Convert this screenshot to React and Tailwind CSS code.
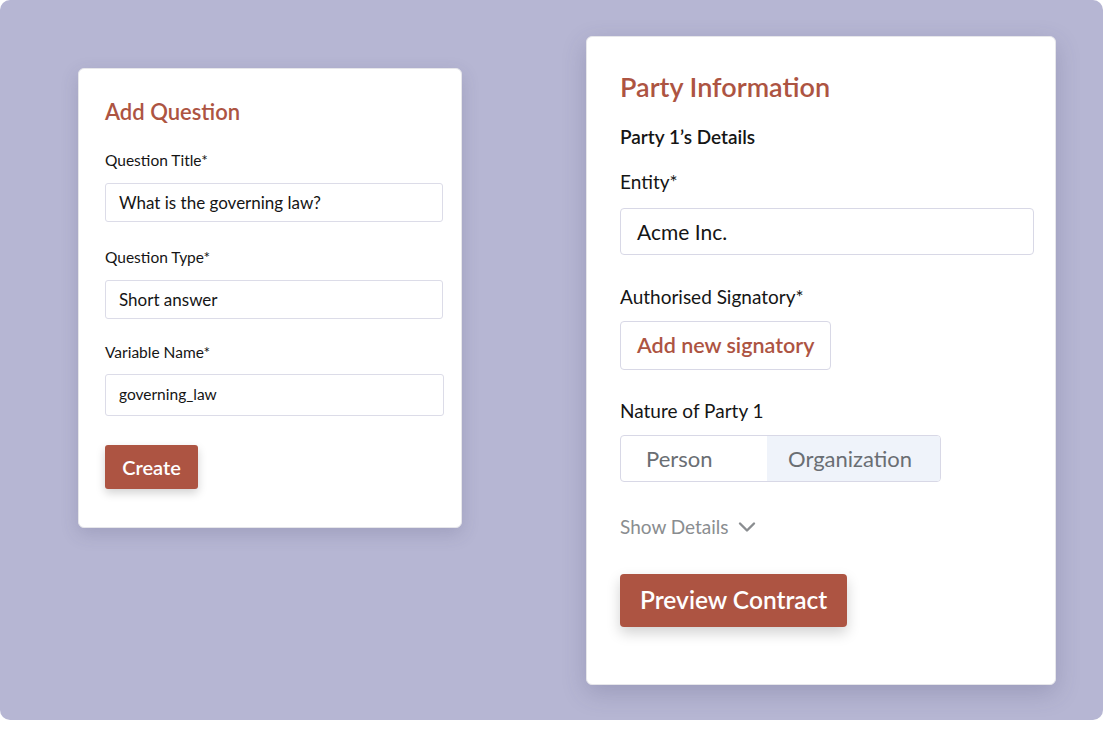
const font = { fontFamily: 'Lato, "Noto Sans", sans-serif' };

const Field = ({ label, children, className = '' }) => (
  <div className={className}>
    <div className="text-[15.5px] leading-[20px] text-[#151515]">{label}</div>
    {children}
  </div>
);

const AddQuestion = () => (
  <div className="mt-[68px] w-[384px] h-[460px] shrink-0 rounded-[6px] border border-[#e6e6ea] bg-white px-[26px] pt-[28px] shadow-[0_6px_18px_rgba(60,60,100,0.18)]">
    <h2 className="text-[22px] leading-[30px] font-semibold text-[#ad5442]">Add Question</h2>
    <Field label="Question Title*" className="mt-[23px]">
      <div className="mt-[13px] h-[39px] w-[338px] rounded-[3px] border border-[#dcdce8] px-[13px] flex items-center text-[17px] text-[#151515]">
        What is the governing law?
      </div>
    </Field>
    <Field label="Question Type*" className="mt-[25px]">
      <div className="mt-[13px] h-[39px] w-[338px] rounded-[3px] border border-[#dcdce8] px-[13px] flex items-center text-[17px] text-[#151515]">
        Short answer
      </div>
    </Field>
    <Field label="Variable Name*" className="mt-[23px]">
      <div className="mt-[12px] h-[42px] w-[339px] rounded-[3px] border border-[#dcdce8] px-[13px] flex items-center text-[15.5px] text-[#151515]">
        governing_law
      </div>
    </Field>
    <button className="mt-[29px] h-[44px] w-[93px] rounded-[3px] bg-[#ad5442] text-white text-[20px] font-semibold shadow-[0_4px_10px_rgba(0,0,0,0.18)]">
      Create
    </button>
  </div>
);

const PartyInfo = () => (
  <div className="mt-[36px] w-[470px] h-[649px] shrink-0 rounded-[6px] border border-[#e6e6ea] bg-white px-[33px] pt-[30px] shadow-[0_8px_24px_rgba(60,60,100,0.22)]">
    <h2 className="text-[27px] leading-[40px] font-semibold text-[#ad5442]">Party Information</h2>
    <div className="mt-[17px] text-[19px] leading-[26px] font-semibold text-[#151515]">Party 1’s Details</div>
    <div className="mt-[19px] text-[19px] leading-[26px] text-[#151515]">Entity*</div>
    <div className="mt-[13px] h-[47px] w-[414px] rounded-[4px] border border-[#d8d8e6] px-[16px] flex items-center text-[21px] text-[#151515]">
      Acme Inc.
    </div>
    <div className="mt-[29px] text-[19px] leading-[26px] text-[#151515]">Authorised Signatory*</div>
    <button className="mt-[11px] h-[49px] px-[16px] rounded-[4px] border border-[#d8d8e6] text-[21.5px] font-semibold text-[#ad5442]">
      Add new signatory
    </button>
    <div className="mt-[28px] text-[19px] leading-[26px] text-[#151515]">Nature of Party 1</div>
    <div className="mt-[11px] flex h-[47px] w-[321px] overflow-hidden rounded-[4px] border border-[#d8d8e6] text-[22px] text-[#6a6e73]">
      <div className="w-[146px] pl-[25px] flex items-center">Person</div>
      <div className="flex-1 pl-[21px] flex items-center bg-[#eff3fa]">Organization</div>
    </div>
    <div className="mt-[32px] flex items-center gap-[9px] text-[19px] leading-[26px] text-[#8a8d90]">
      Show Details
      <svg width="18" height="12" viewBox="0 0 18 12" fill="none" stroke="#8a8d90" strokeWidth="2.4" strokeLinecap="round" strokeLinejoin="round">
        <path d="M2 2.5l7 7 7-7" />
      </svg>
    </div>
    <button className="mt-[34px] h-[53px] px-[20px] rounded-[4px] bg-[#ad5442] text-white text-[24.5px] font-semibold shadow-[0_6px_14px_rgba(0,0,0,0.18)]">
      Preview Contract
    </button>
  </div>
);

export default function App() {
  return (
    <div className="w-[1104px] h-[730px] bg-white" style={font}>
      <div className="h-[720px] w-[1103px] rounded-[10px] bg-[#b6b6d3] flex items-start pl-[78px] gap-[124px]">
        <AddQuestion />
        <PartyInfo />
      </div>
    </div>
  );
}
